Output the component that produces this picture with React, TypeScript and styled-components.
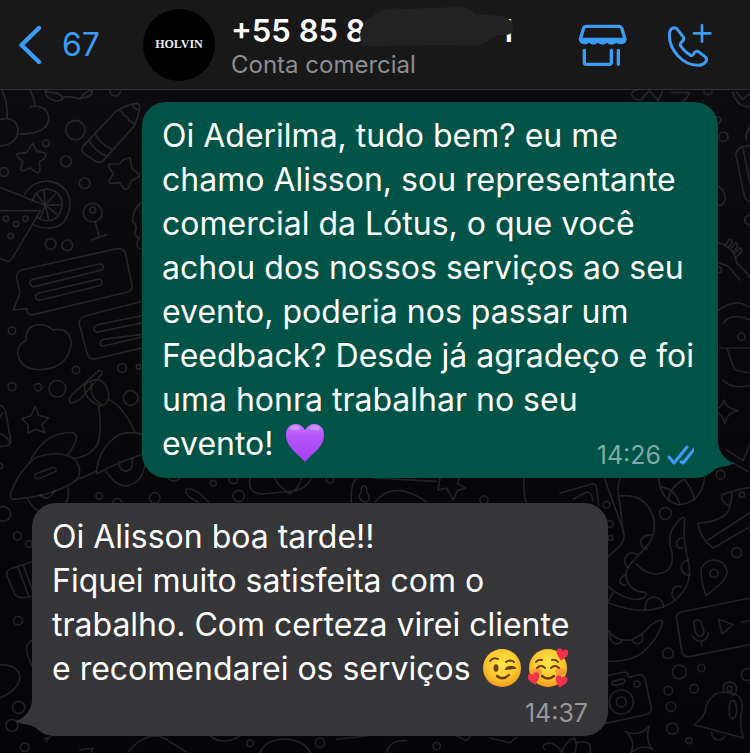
import React from "react";
import styled, { createGlobalStyle } from "styled-components";

const GlobalStyle = createGlobalStyle`
  *, *::before, *::after { box-sizing: border-box; }
  html, body, #root { height: 100%; }
  body {
    margin: 0;
    background: #08080a;
    color: #fff;
    font-family: Inter, "Liberation Sans", sans-serif;
  }
`;

const Page = styled.div`
  min-height: 100%;
  display: flex;
  flex-direction: column;
`;

const Header = styled.header`
  display: flex;
  align-items: center;
  min-height: 90px;
  padding: 0 36px 0 18px;
  background: #181818;
  border-bottom: 1px solid #303032;
`;

const IconButton = styled.button`
  display: flex;
  align-items: center;
  padding: 0;
  border: 0;
  background: none;
  color: #3b9bf5;
  font: inherit;
  cursor: pointer;
`;

const BackButton = styled(IconButton)`
  gap: 18px;
  width: 125px;
  font-size: 32px;
`;

const Avatar = styled.div`
  display: flex;
  align-items: center;
  justify-content: center;
  flex: none;
  width: 72px;
  height: 72px;
  border-radius: 50%;
  background: #000;
  color: #eee;
  font: 700 12px "Liberation Serif", serif;
`;

const Contact = styled.div`
  position: relative;
  width: 284px;
  margin-left: 16px;
  padding-top: 4px;
`;

const Phone = styled.h1`
  display: flex;
  justify-content: space-between;
  margin: 0;
  padding-right: 2px;
  font-size: 31px;
  font-weight: 600;
  line-height: 36px;
  white-space: pre;
`;

const Smudge = styled.svg`
  position: absolute;
  top: -7px;
  right: 0;
`;

const Subtitle = styled.p`
  margin: 0;
  color: #8d8d92;
  font-size: 24px;
  line-height: 32px;
`;

const Actions = styled.nav`
  display: flex;
  align-items: center;
  gap: 38px;
  margin-left: auto;
`;

const Chat = styled.main`
  position: relative;
  flex: 1;
  display: flex;
  flex-direction: column;
  gap: 25px;
  padding: 12px 32px 17px;
  overflow: hidden;
  background: linear-gradient(#0c0c10, #070709 50%, #050507);
`;

const Wallpaper = styled.svg`
  position: absolute;
  inset: 0;
  width: 100%;
  height: 100%;
  fill: none;
  stroke: #fff;
  stroke-opacity: 0.115;
  stroke-width: 5;
  stroke-linecap: round;
  stroke-linejoin: round;
`;

const Bubble = styled.article<{ $sent?: boolean }>`
  position: relative;
  width: 576px;
  max-width: 100%;
  padding: 12px 20px;
  border-radius: 24px;
  align-self: ${(p) => (p.$sent ? "flex-end" : "flex-start")};
  background: ${(p) => (p.$sent ? "#005347" : "#363638")};
  color: ${(p) => (p.$sent ? "#005347" : "#363638")};
`;

const Tail = styled.svg<{ $sent?: boolean }>`
  position: absolute;
  bottom: 0;
  ${(p) => (p.$sent ? "right: -18px;" : "left: -18px; transform: scaleX(-1);")}
  fill: currentColor;
`;

const Text = styled.p`
  margin: 0;
  color: #fff;
  font-size: 32px;
  line-height: 44px;
  white-space: pre-line;
`;

const LastLine = styled.div`
  display: flex;
  align-items: flex-end;
  justify-content: space-between;
`;

const Meta = styled.div<{ $sent?: boolean }>`
  display: flex;
  align-items: center;
  justify-content: flex-end;
  gap: 6px;
  margin-top: 11px;
  color: ${(p) => (p.$sent ? "#7fa9a3" : "#97979b")};
  font-size: 25px;
  line-height: 22px;
`;

const EmojiSvg = styled.svg`
  width: 40px;
  height: 40px;
  margin: 0 4px 0 2px;
  vertical-align: -8px;
`;

function Heart() {
  return (
    <EmojiSvg viewBox="0 0 40 40" role="img" aria-label="💜">
      <defs>
        <linearGradient id="violet" x1="0" y1="0" x2="0" y2="1">
          <stop offset="0" stopColor="#c97cff" />
          <stop offset="0.3" stopColor="#b556fa" />
          <stop offset="1" stopColor="#a43df0" />
        </linearGradient>
      </defs>
      <path d="M20 39C13 31 1 24 1 12C1 5 5 1 11 1C15 1 18 4 20 7C22 4 25 1 29 1C35 1 39 5 39 12C39 24 27 31 20 39Z" fill="url(#violet)" />
      <ellipse cx="10" cy="5" rx="5" ry="2" fill="#e2b5ff" opacity="0.5" />
      <ellipse cx="30" cy="5" rx="5" ry="2" fill="#e2b5ff" opacity="0.5" />
    </EmojiSvg>
  );
}

function FaceGradient({ id }: { id: string }) {
  return (
    <defs>
      <radialGradient id={id} cx="0.5" cy="0.38" r="0.62">
        <stop offset="0" stopColor="#ffe64a" />
        <stop offset="0.6" stopColor="#fdc92f" />
        <stop offset="1" stopColor="#f29a1c" />
      </radialGradient>
    </defs>
  );
}

function Wink() {
  return (
    <EmojiSvg viewBox="0 0 40 40" role="img" aria-label="😉">
      <FaceGradient id="wink-face" />
      <circle cx="20" cy="20" r="19" fill="url(#wink-face)" />
      <ellipse cx="14" cy="20" rx="2.5" ry="3.8" fill="#6b3d0a" />
      <g fill="none" stroke="#6b3d0a" strokeWidth="2" strokeLinecap="round">
        <path d="M8 13Q11 9 16 11" />
        <path d="M24 14Q28 11 32 14" />
        <path d="M24 21Q28 17 33 20M25 21L32 20" />
        <path d="M15 28Q21 33 27 27" strokeWidth="2.4" />
      </g>
    </EmojiSvg>
  );
}

const SMALL_HEART = "M0 6C-2 3-6 1-6-3C-6-7-1-7 0-4C1-7 6-7 6-3C6 1 2 3 0 6Z";

function LovedFace() {
  return (
    <EmojiSvg viewBox="0 0 40 40" role="img" aria-label="🥰">
      <FaceGradient id="loved-face" />
      <circle cx="20" cy="20" r="19" fill="url(#loved-face)" />
      <ellipse cx="9" cy="24" rx="5" ry="4" fill="#f5793a" opacity="0.55" />
      <ellipse cx="32" cy="24" rx="5" ry="4" fill="#f5793a" opacity="0.55" />
      <g fill="none" stroke="#6b3d0a" strokeWidth="2" strokeLinecap="round">
        <path d="M8 14Q10 11 14 12M24 12Q28 11 30 14" />
        <path d="M9 20Q13 16 17 20M23 20Q27 16 31 20" />
        <path d="M14 28Q20 33 26 28" strokeWidth="2.4" />
      </g>
      <g fill="#f0324b">
        <path d={SMALL_HEART} transform="translate(34 7) rotate(12)" />
        <path d={SMALL_HEART} transform="translate(6 31) rotate(-14)" />
        <path d={SMALL_HEART} transform="translate(33 34) rotate(12)" />
      </g>
    </EmojiSvg>
  );
}

function ChevronIcon() {
  return (
    <svg width="26" height="40" viewBox="0 0 26 40" fill="none" stroke="currentColor" strokeWidth="4.4" strokeLinecap="round" strokeLinejoin="round" aria-hidden>
      <path d="M21 3L3.5 20L21 37" />
    </svg>
  );
}

function StoreIcon() {
  return (
    <svg width="50" height="44" viewBox="85 70 150 132" fill="none" stroke="currentColor" strokeWidth="10" strokeLinecap="round" strokeLinejoin="round" aria-hidden>
      <path d="M109 80H209Q214 80 216 85L226 119H92L102 85Q104 80 109 80Z" />
      <path d="M91 118H227Q228 130 215 131Q206 131 200 126Q194 132 186 132Q178 132 172 126Q166 132 159 132Q151 132 145 126Q139 132 131 132Q124 132 118 126Q112 132 104 131Q91 130 91 118Z" fill="currentColor" strokeWidth="6" />
      <path d="M104 152V188Q104 194 110 194H179Q185 194 185 188V152M206 152V194" />
    </svg>
  );
}

function CallIcon() {
  return (
    <svg width="48" height="46" viewBox="348 60 144 138" fill="none" stroke="currentColor" strokeWidth="9" strokeLinecap="round" strokeLinejoin="round" aria-hidden>
      <path d="M380 80L400 105Q404 111 397 118L392 124Q389 128 392 132Q404 150 422 160Q426 162 429 158L434 151Q439 146 445 149L464 163Q473 170 468 178Q460 190 443 190C398 190 358 144 358 100Q358 84 367 79Q374 75 380 80Z" />
      <path d="M456 69V119M432 94H481" strokeWidth="8" />
    </svg>
  );
}

function ReadTicks() {
  return (
    <svg width="31" height="22" viewBox="0 0 31 22" fill="none" stroke="#3b9bf5" strokeWidth="3" strokeLinecap="round" strokeLinejoin="round" aria-label="Lida" role="img">
      <path d="M2 13L7 19L20 3M14 18L16 19L29 3" />
    </svg>
  );
}

const TAIL_SHAPE = "M24 0C24 9 31 19 41 21C34 25 25 24 20 28C15 33 9 36 0 36V0Z";

function BubbleTail({ sent }: { sent?: boolean }) {
  return (
    <Tail $sent={sent} width="42" height="36" viewBox="0 0 42 36" aria-hidden>
      <path d={TAIL_SHAPE} />
    </Tail>
  );
}

type Dot = [number, number, number];

function Dots({ items }: { items: Dot[] }) {
  return (
    <>
      {items.map(([x, y, r]) => (
        <circle key={`${x}-${y}-${r}`} cx={x} cy={y} r={r} />
      ))}
    </>
  );
}

function Doodles() {
  return (
    <Wallpaper viewBox="0 90 750 663" preserveAspectRatio="xMidYMin slice" aria-hidden>
      {/* pencil, stars, cocktail and chat card */}
      <g transform="translate(0 90) scale(0.3333)">
        <path d="M0 -8Q22 20 22 83M90 0Q104 24 104 48Q148 52 146 90Q138 132 60 132M104 48Q96 48 90 52M0 88Q46 78 54 116Q56 162 0 168" />
        <path d="M136 2Q150 10 166 8Q188 14 188 28Q170 38 150 26Q136 18 136 2M188 24Q210 14 240 28Q256 0 278 2Q276 24 240 24" />
        <path d="M248 170L350 62Q380 44 410 40Q422 42 418 58Q414 84 404 106L308 214Q298 220 284 212L254 192Q242 182 248 170ZM268 152Q282 182 318 198M286 132Q298 158 334 178M356 62Q366 60 372 76Q384 78 386 92Q400 96 404 106M398 44Q402 58 418 60" />
        <path d="M96 162Q100 160 104 172L112 184L132 188Q144 194 132 206L118 216L120 240Q118 254 104 244L90 234L70 242Q58 244 64 230L68 214L52 200Q46 190 60 190L80 188Z" />
        <path d="M386 204Q392 202 392 214L396 236L414 250Q424 258 410 264L394 272L386 292Q380 304 370 294L360 278L336 280Q324 280 328 270L340 252L328 232Q322 220 336 222L358 222L372 208Z" />
        <path d="M74 314Q98 270 150 274Q210 286 210 346Q202 418 138 414Q116 414 102 404M98 330Q110 294 148 298Q186 306 186 346Q180 394 138 392Q120 390 112 380M136 346L132 300M136 346L166 312M136 346L186 344M136 346L170 372M136 346L146 390M136 346L120 386M136 346L108 310" />
        <path d="M0 292L134 346M0 362H122L36 506Q28 518 16 512L0 506" />
        <circle cx="278" cy="368" r="28" />
        <path d="M286 396L298 440M274 450L320 434" />
        <path d="M64 540L350 476Q370 474 376 488L396 584Q398 600 384 606L100 674Q82 678 80 656L40 660L60 610L50 562Q50 546 64 540ZM98 568L298 522Q310 522 310 532Q310 540 298 542L104 590Q92 592 90 580Q90 572 98 568ZM114 610L292 568Q306 566 306 576Q306 584 296 588L122 630Q108 632 106 620Q106 614 114 610Z" />
        <path d="M450 628L256 678Q236 686 238 702L262 792Q270 812 290 806L450 768M450 672L294 704Q278 710 284 722Q290 730 302 724L450 694M450 730L310 748Q296 756 302 766Q310 770 320 766L450 736" />
        <path d="M450 328Q400 336 398 396Q414 404 404 428Q406 442 418 442Q402 468 420 476" />
        <path d="M78 752Q76 706 118 704Q146 706 158 720Q208 710 214 758Q206 832 130 838Q58 844 52 784Q58 760 78 752" />
        <Dots items={[[226, 120, 29], [138, 160, 10], [198, 214, 16], [254, 280, 16], [12, 246, 13], [278, 360, 9], [152, 462, 16], [202, 466, 16], [36, 722, 11], [18, 386, 8], [48, 402, 8], [76, 386, 8], [32, 438, 8], [346, 2, 16]]} />
      </g>
      {/* scooter with smaller marks around it */}
      <g transform="translate(0 330) scale(0.3333)">
        <path d="M0 226Q14 230 18 250L32 330Q34 344 16 348L0 350M0 262L8 248M0 310Q22 320 28 336" />
        <path d="M106 230L116 256L146 264L126 284L134 308L108 298L84 310L84 284L66 266L92 258Z" />
        <path d="M210 218Q204 210 216 194L296 122Q308 120 306 132L242 206Q222 222 210 218ZM274 152Q312 138 326 190Q328 224 302 228Q248 208 254 164ZM274 158Q270 206 304 222M296 228Q310 330 284 354Q260 382 226 384M326 208Q370 230 404 304" />
        <path d="M92 388Q132 322 178 312Q226 300 230 320Q222 356 202 374M36 508Q26 500 38 474Q64 418 104 384Q184 356 226 390Q250 420 230 450Q160 500 36 508ZM230 448Q260 440 288 424M106 432L160 412Q170 414 168 424L116 446Q100 448 106 432Z" />
        <path d="M84 508Q104 548 144 552Q214 540 204 472M120 494Q142 520 164 482M290 432Q290 360 356 314Q400 300 440 318M290 432Q350 396 450 366M318 424Q346 468 376 468Q430 462 436 396M356 394Q356 424 380 424Q402 416 396 386" />
        <path d="M22 740Q14 720 38 714L100 694M54 712L88 804M70 706L104 798M22 740L46 796Q60 810 106 796" />
        <Dots items={[[228, 120, 11], [366, 114, 13], [416, 110, 7], [36, 170, 12], [114, 172, 11], [172, 176, 25], [392, 204, 22], [298, 498, 10], [352, 518, 13], [10, 552, 22], [52, 618, 12], [86, 642, 10], [0, 408, 8], [54, 872, 13], [56, 1132, 18], [36, 1186, 18], [74, 1252, 13]]} />
        <path d="M100 930Q70 940 84 980L100 1016M0 1004Q54 1004 60 1040Q58 1078 0 1104M384 1266Q450 1190 510 1236L560 1266M240 1260L280 1254L274 1266M134 1228L150 1220L138 1236" />
      </g>
      {/* edge of the page below the header, and the right margin */}
      <g transform="translate(600 80) scale(0.3333)">
        <path d="M94 44Q98 30 112 30M94 44Q104 62 122 60L146 34M150 34L174 62L188 34M216 38L268 38Q264 54 246 66M398 36Q410 82 450 80M410 36L428 58L450 40" />
        <path d="M450 140Q436 156 440 180M450 198Q410 196 408 226L434 352Q442 364 450 366M430 208L450 312M350 316Q378 330 376 358Q370 380 350 376" />
        <path d="M350 488Q400 494 410 548L450 590M350 546L384 558L420 600M376 496L388 478Q396 478 396 488L386 502M392 506L406 488Q414 490 412 500L402 514M404 520L420 504Q428 508 422 518L410 530" />
        <path d="M356 690Q410 650 450 684M370 730Q390 696 450 720M360 804H450M380 804L404 870L450 880M368 900Q398 930 450 916" />
        <Dots items={[[370, 170, 14], [448, 420, 14], [354, 120, 9], [324, 32, 12], [356, 570, 9], [424, 770, 11]]} />
      </g>
      <g transform="translate(560 400) scale(0.3333)">
        <path d="M492 0Q494 22 534 32Q500 38 494 72Q490 42 462 32Q484 24 492 0M500 150L550 182L570 130M520 190L564 214" />
        <path d="M296 232Q300 300 354 314Q424 310 434 232M300 260Q344 266 358 308M372 238Q330 260 324 302M372 238Q400 268 404 302" />
        <path d="M0 280L96 252Q108 250 110 264L116 316M40 298L80 276Q96 276 98 300M132 232L188 386Q200 412 180 438L144 470M180 234Q168 270 180 310Q184 350 190 400M180 288Q260 278 282 360Q290 410 252 448L216 486M276 404Q242 404 242 430Q250 448 262 446M236 466Q206 446 194 480Q196 500 206 504M226 490Q276 540 322 512Q344 490 334 450Q322 410 340 382Q370 342 374 356Q368 420 384 480M366 412Q344 420 352 440Q360 448 368 444" />
        <path d="M484 286Q520 270 570 262M484 286Q486 310 510 318Q504 362 414 370Q420 416 460 444L570 380M444 420L570 338M514 276Q520 300 508 318" />
        <Dots items={[[482, 224, 13], [316, 340, 18], [530, 458, 15], [546, 284, 8], [140, 314, 10], [150, 372, 10], [152, 414, 7]]} />
      </g>
      {/* location pin, voice note, camera and bell */}
      <g transform="translate(600 560) scale(0.3333)">
        <path d="M96 6Q62 44 92 80Q110 98 134 96Q144 104 130 114Q90 132 24 80M264 0Q284 76 220 124Q146 176 24 128M24 124L42 94M262 2Q240 6 244 28Q254 46 270 46M244 80Q218 72 216 104Q220 118 228 120M136 146Q136 108 168 112Q190 120 190 142M76 44Q54 56 62 70Q68 76 78 76" />
        <path d="M318 106Q300 60 304 28Q314 0 342 0Q376 2 382 36Q378 66 318 106ZM450 114L244 156Q226 162 230 178L246 276Q250 292 268 290L450 254M282 190Q278 180 294 180Q304 182 306 194L312 216Q312 228 298 228Q288 224 286 214ZM276 226Q286 244 304 244Q326 238 324 218M304 244L306 258M356 178L400 194L366 222ZM424 186L450 182" />
        <path d="M24 212Q50 246 94 240Q130 224 152 196Q182 174 188 184Q178 228 142 264Q106 306 24 304M28 214Q26 246 48 252Q62 250 68 240M96 242Q108 258 124 246Q132 232 126 224" />
        <path d="M24 346L74 336Q84 336 86 352L118 344Q132 344 136 360L154 444Q154 460 138 464L0 494M38 364L70 356Q80 362 70 370L44 376Q32 376 38 364ZM76 514Q116 534 148 498Q134 540 158 568Q124 550 92 580Q110 542 76 514" />
        <path d="M282 494Q318 470 318 440Q338 390 382 398Q432 400 426 450Q416 488 430 534ZM334 516Q338 540 356 540Q370 538 374 528M388 434Q390 420 402 422Q416 440 406 470Q394 484 388 466ZM372 396Q364 370 388 366Q416 370 408 396Q404 406 396 406" />
        <Dots items={[[342, 40, 12], [204, 280, 16], [238, 336, 21], [304, 324, 11], [205, 392, 13], [282, 386, 13], [213, 440, 14], [217, 506, 17], [267, 542, 9], [442, 344, 18], [64, 426, 36], [64, 426, 15], [111, 372, 9], [388, 386, 8]]} />
      </g>
      {/* strip between the two bubbles */}
      <g transform="translate(140 400) scale(0.3333)">
        <path d="M82 232Q98 254 122 232M138 268Q160 258 206 306M138 268Q128 282 174 306M330 232Q320 280 366 282L430 276Q500 276 514 232M404 232Q412 258 450 282Q480 260 486 232M652 234Q632 244 634 306M664 264Q672 250 680 264V276Q696 296 680 306Q664 308 658 292Q658 282 664 276Z" />
        <path d="M700 234L890 244M900 234L894 270L920 264L940 300L952 272L976 264L952 250L960 232M706 306Q760 236 860 306M1152 234Q1150 280 1158 306" />
        <Dots items={[[220, 250, 9], [280, 238, 13], [44, 294, 16], [296, 288, 17], [570, 238, 11], [1032, 300, 12]]} />
      </g>
      {/* foot of the page */}
      <g transform="translate(200 736) scale(0.3333)">
        <path d="M30 0Q70 30 120 0M180 50Q200 4 270 10Q320 20 330 50M410 10L500 0M560 50Q570 10 620 14M770 0L800 14L812 0M870 6L930 20L950 4M1034 40Q1020 26 1050 20Q1080 30 1084 50Q1100 12 1124 6Q1134 30 1124 50M1130 20Q1180 10 1170 50" />
        <Dots items={[[150, 22, 10], [360, 20, 14], [710, 30, 11]]} />
      </g>
    </Wallpaper>
  );
}

export default function App() {
  return (
    <Page>
      <GlobalStyle />
      <Header>
        <BackButton type="button" aria-label="Voltar, 67 conversas">
          <ChevronIcon />
          67
        </BackButton>
        <Avatar>HOLVIN</Avatar>
        <Contact>
          <Phone>
            <span>+55 85 8</span>
            <span>1</span>
          </Phone>
          <Smudge width="156" height="46" viewBox="0 0 156 46" aria-hidden>
            <path d="M1 32Q4 18 14 14Q24 4 44 7L100 5Q112 6 116 12L142 14Q156 18 155 27Q153 34 143 33Q136 33 132 38Q120 46 90 43L24 44Q10 46 2 43Z" fill="#222" />
          </Smudge>
          <Subtitle>Conta comercial</Subtitle>
        </Contact>
        <Actions>
          <IconButton type="button" aria-label="Ver loja">
            <StoreIcon />
          </IconButton>
          <IconButton type="button" aria-label="Nova ligação">
            <CallIcon />
          </IconButton>
        </Actions>
      </Header>
      <Chat>
        <Doodles />
        <Bubble $sent>
          <BubbleTail sent />
          <Text>
            {"Oi Aderilma, tudo bem? eu me\nchamo Alisson, sou representante\ncomercial da Lótus, o que você\nachou dos nossos serviços ao seu\nevento, poderia nos passar um\nFeedback? Desde já agradeço e foi\numa honra trabalhar no seu"}
          </Text>
          <LastLine>
            <Text>
              {"evento! "}
              <Heart />
            </Text>
            <Meta $sent>
              <time>14:26</time>
              <ReadTicks />
            </Meta>
          </LastLine>
        </Bubble>
        <Bubble>
          <BubbleTail />
          <Text>
            {"Oi Alisson boa tarde!!\nFiquei muito satisfeita com o\ntrabalho. Com certeza virei cliente\ne recomendarei os serviços "}
            <Wink />
            <LovedFace />
          </Text>
          <Meta>
            <time>14:37</time>
          </Meta>
        </Bubble>
      </Chat>
    </Page>
  );
}
